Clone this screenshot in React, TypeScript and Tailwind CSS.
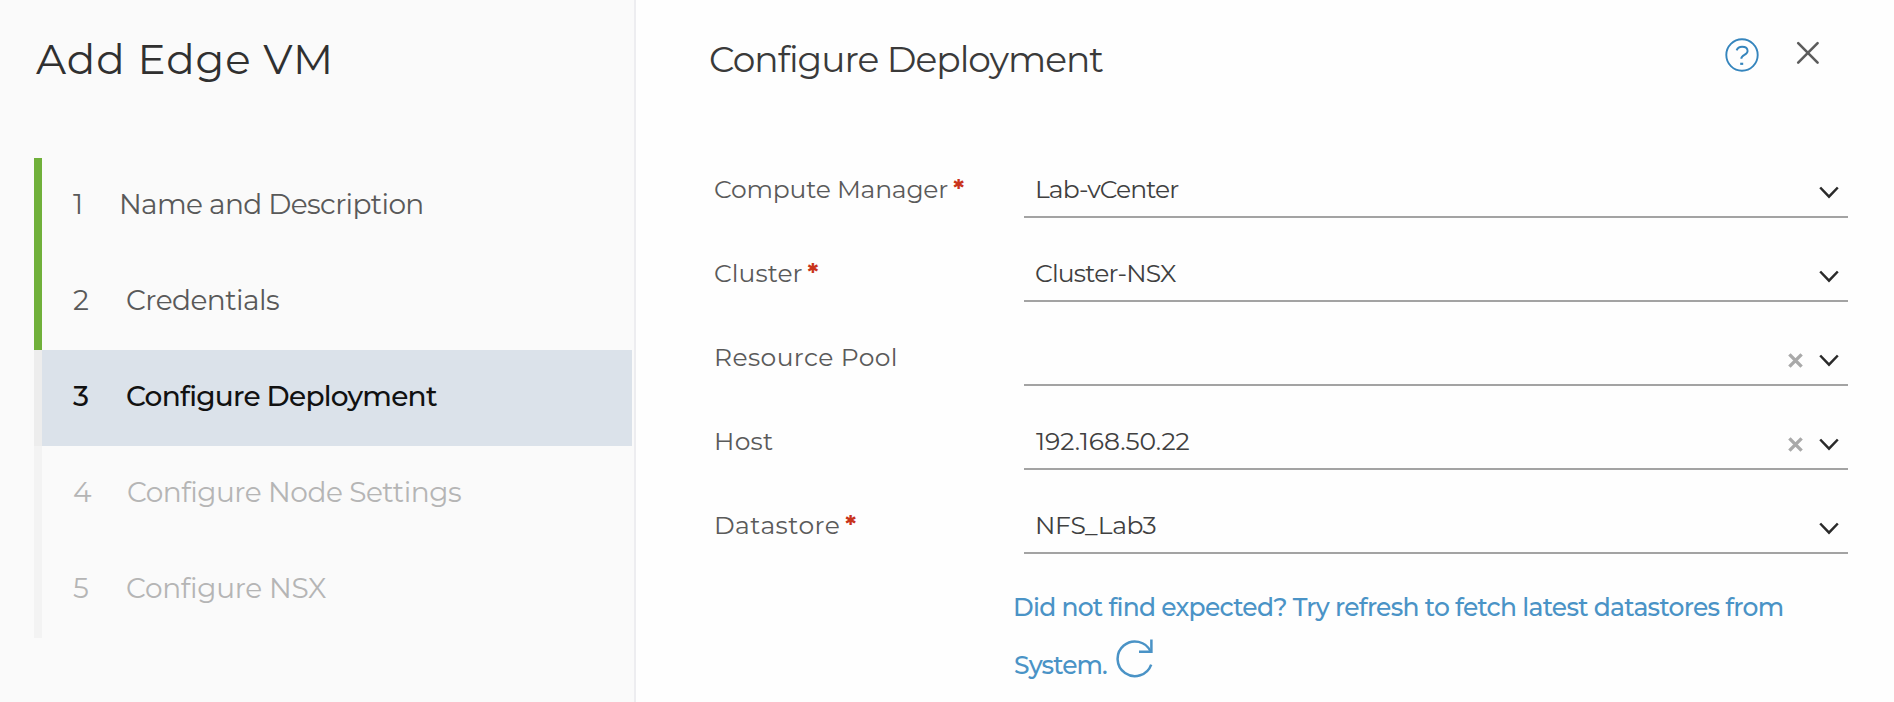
type Step = {
  label: string;
  status: "done" | "current" | "pending";
  labelClass: string;
  numberClass: string;
};

const steps: Step[] = [
  { label: "Name and Description", status: "done", numberClass: "w-[46px]", labelClass: "tracking-[-0.64px]" },
  { label: "Credentials", status: "done", numberClass: "w-[53px]", labelClass: "tracking-[-0.54px]" },
  { label: "Configure Deployment", status: "current", numberClass: "w-[53px]", labelClass: "tracking-[-0.74px]" },
  { label: "Configure Node Settings", status: "pending", numberClass: "w-[54px]", labelClass: "tracking-[-0.48px]" },
  { label: "Configure NSX", status: "pending", numberClass: "w-[53px]", labelClass: "tracking-[-0.29px]" },
];

const rowStyles = {
  done: "border-[#70b03a] text-[#595959]",
  current: "border-[#ededed] bg-[#dbe2ea] bg-clip-padding font-medium text-[#111111]",
  pending: "border-[#f3f3f3] text-[#b5b5b5]",
};

type Field = {
  label: string;
  value: string;
  required?: boolean;
  clearable?: boolean;
  labelClass: string;
  valueClass: string;
};

const fields: Field[] = [
  { label: "Compute Manager", value: "Lab-vCenter", required: true, labelClass: "tracking-[-0.19px]", valueClass: "tracking-[-0.9px]" },
  { label: "Cluster", value: "Cluster-NSX", required: true, labelClass: "tracking-[0.05px]", valueClass: "tracking-[-0.8px]" },
  { label: "Resource Pool", value: "", clearable: true, labelClass: "tracking-[0.4px]", valueClass: "" },
  { label: "Host", value: "192.168.50.22", clearable: true, labelClass: "tracking-[0.3px]", valueClass: "tracking-[0px] pl-[1px]" },
  { label: "Datastore", value: "NFS_Lab3", required: true, labelClass: "tracking-[0.45px]", valueClass: "tracking-[-0.35px]" },
];

function HelpIcon() {
  return (
    <svg width="36" height="36" viewBox="0 0 36 36" fill="none" stroke="#3585bd" strokeWidth="1.9">
      <circle cx="18" cy="18" r="15.7" />
      <path d="M12.6 13.3c1.2-3 3.5-3.6 5.5-3.6 3.200 0 5.500 1.700 5.500 4.400 0 4.200-6.300 3.500-6.300 7.600" />
      <path d="M16.200 26.800h3" strokeWidth="2.200" />
    </svg>
  );
}

function CloseIcon() {
  return (
    <svg width="24" height="24" viewBox="0 0 24 24" stroke="#5c5c5c" strokeWidth="2.600" strokeLinecap="round">
      <path d="M2.200 2.200l19.400 19.400M21.600 2.200L2.200 21.600" />
    </svg>
  );
}

function ChevronIcon() {
  return (
    <svg width="20" height="14" viewBox="0 0 20 14" fill="none" stroke="#2a2a2a" strokeWidth="2.500">
      <path d="M1.200 1.500L10 10.700l8.800-9.200" />
    </svg>
  );
}

function ClearIcon() {
  return (
    <svg className="-mt-0.5" width="15" height="15" viewBox="0 0 14 14" stroke="#a9a9a9" strokeWidth="3.200">
      <path d="M1.300 1.300l11.400 11.400M12.700 1.300L1.300 12.700" />
    </svg>
  );
}

function RefreshIcon() {
  return (
    <svg width="38" height="40" viewBox="0 0 38 40" fill="none" stroke="#4a93c6" strokeWidth="2.500">
      <path d="M35.200 25.600A17.300 17.300 0 1 1 34.600 12.500" />
      <path d="M35.400 0.500V12.800H23" />
    </svg>
  );
}

function StepRow({ step, index }: { step: Step; index: number }) {
  return (
    <li className={`flex h-24 items-center border-l-8 pb-1 pl-[31px] text-[28px] ${rowStyles[step.status]}`}>
      <span className={`shrink-0 ${step.numberClass}`}>{index + 1}</span>
      <span className={`whitespace-nowrap ${step.labelClass}`}>{step.label}</span>
    </li>
  );
}

function FieldRow({ field }: { field: Field }) {
  return (
    <div className="flex h-[84px] pt-[26px]">
      <div className="flex w-[310px] shrink-0 items-center whitespace-nowrap text-[25px] leading-none text-[#5a5a5a]">
        <span className={field.labelClass}>{field.label}</span>
        {field.required && <span className="ml-[5px] font-bold text-[#c9341c]">*</span>}
      </div>
      <div className="flex flex-1 items-center border-b-2 border-[#a3a3a3] pr-[9px] pl-[11px]">
        <span className={`flex-1 pt-0.5 text-[25px] leading-none text-[#404040] ${field.valueClass}`}>{field.value}</span>
        <span className="flex items-center gap-4 pt-2.5">
          {field.clearable && <ClearIcon />}
          <ChevronIcon />
        </span>
      </div>
    </div>
  );
}

export default function App() {
  return (
    <div className="flex h-[702px] w-[1894px] overflow-hidden bg-[#fefefe] font-['Montserrat','Inter',sans-serif]">
      <aside className="w-[636px] shrink-0 border-r-2 border-[#ededf0] bg-[#fafafa] pl-[34px]">
        <h1 className="flex h-[158px] items-start pt-[29px] pl-[2px] text-[42px] leading-[60px] tracking-[0.9px] text-[#303030]">
          Add Edge VM
        </h1>
        <ol className="mr-[2px]">
          {steps.map((step, i) => (
            <StepRow key={step.label} step={step} index={i} />
          ))}
        </ol>
      </aside>
      <main className="flex-1 pr-[46px] pl-[78px]">
        <header className="flex h-[134px] items-start pt-[29px]">
          <h2 className="-ml-[5px] flex-1 text-[36px] leading-[60px] tracking-[-0.98px] text-[#3a3a3a]">
            Configure Deployment
          </h2>
          <div className="flex items-center gap-[36px] pt-2 pr-[28px]">
            <HelpIcon />
            <span className="-mt-1">
              <CloseIcon />
            </span>
          </div>
        </header>
        {fields.map((field) => (
          <FieldRow key={field.label} field={field} />
        ))}
        <div className="ml-[299px] pt-[24px] text-[25px] leading-[58px] font-medium whitespace-nowrap text-[#4a93c6]">
          <p className="tracking-[-0.74px]">Did not find expected? Try refresh to fetch latest datastores from</p>
          <p className="flex items-start">
            <span className="ml-[1px] tracking-[-0.9px]">System.</span>
            <span className="ml-[9px] pt-[3px]">
              <RefreshIcon />
            </span>
          </p>
        </div>
      </main>
    </div>
  );
}
